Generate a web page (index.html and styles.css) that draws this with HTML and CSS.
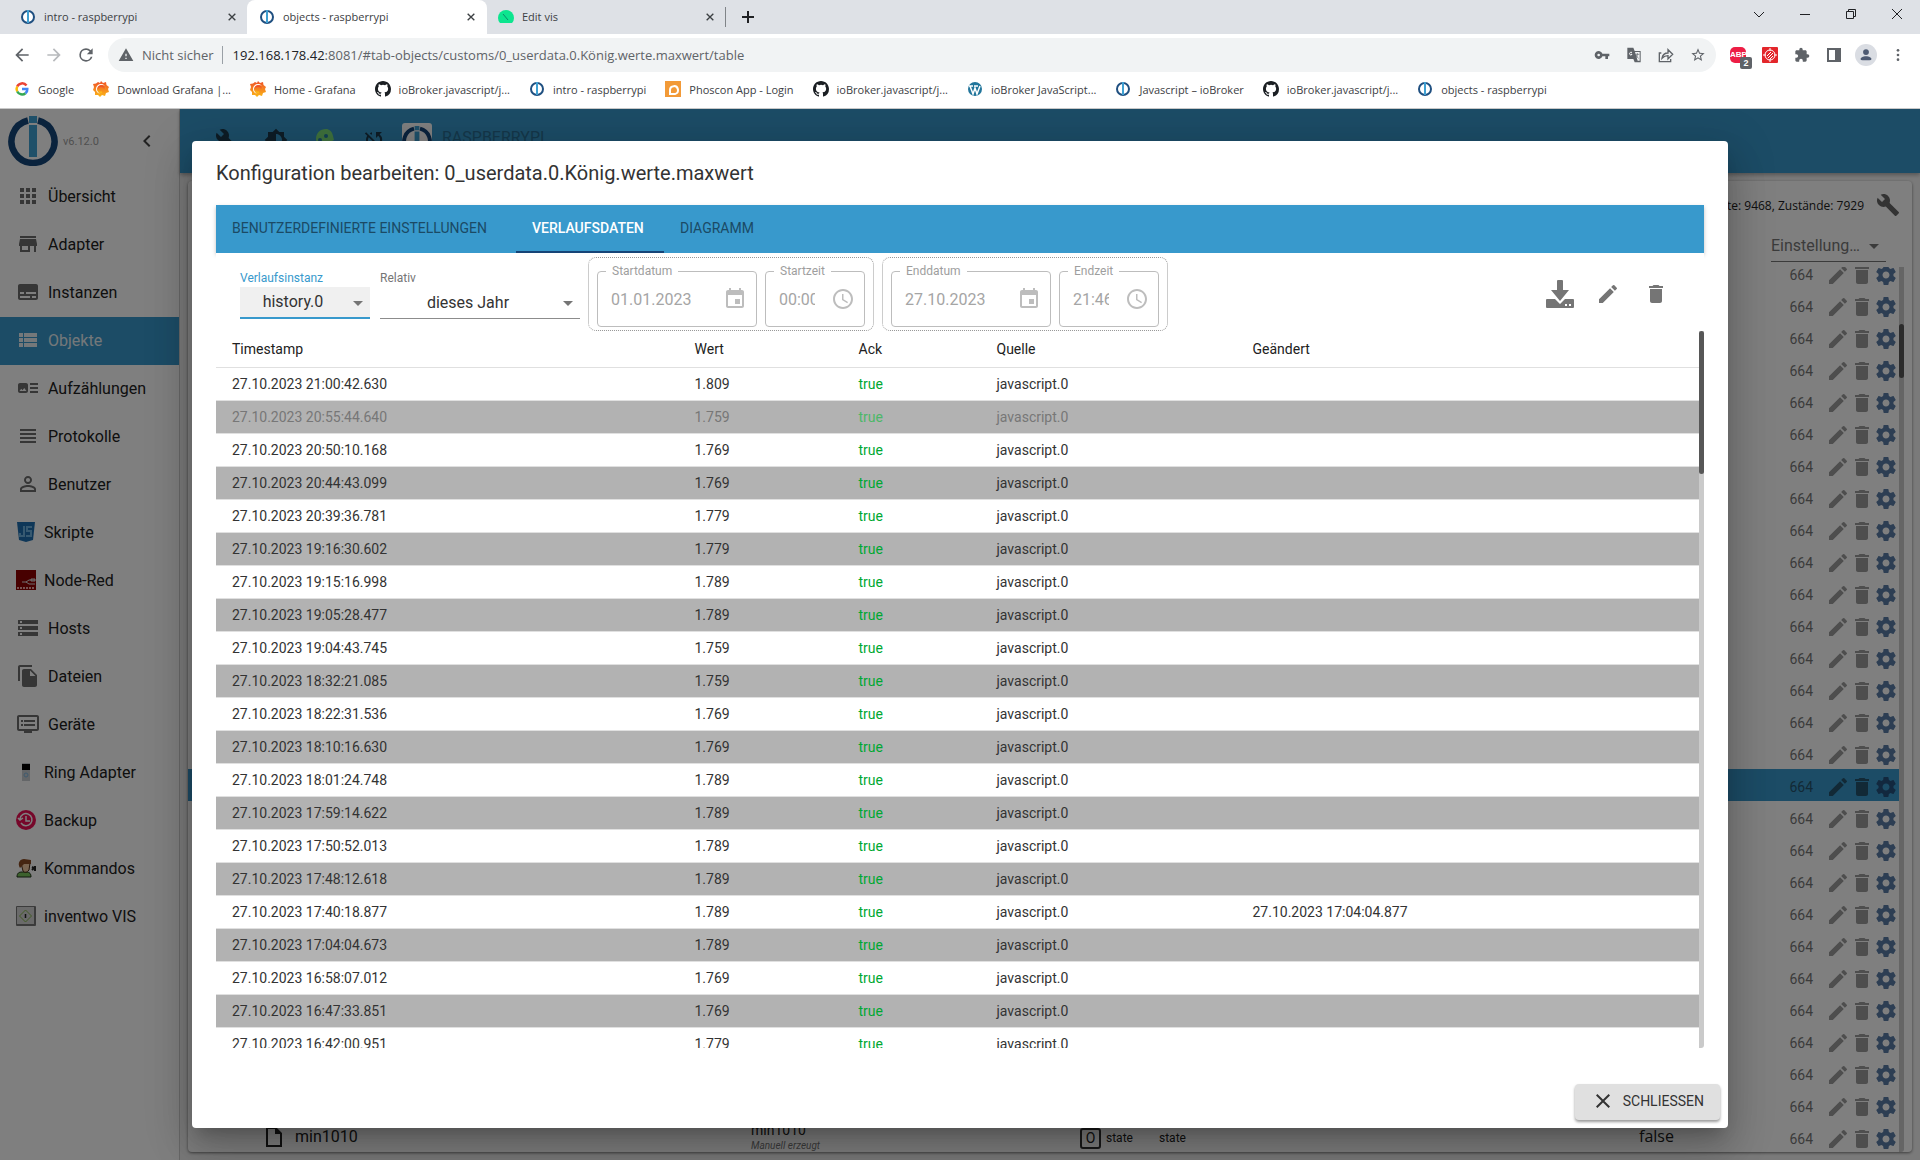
FILE: index.html
```html
<!DOCTYPE html>
<html lang="de">

<head>
    <meta charset="UTF-8">
    <title>objects - raspberrypi</title>
    <link rel="stylesheet" href="styles.css">
</head>

<body>
    <!-- icons -->
    <svg class="sprite" aria-hidden="true">
        <symbol id="i-wrench" viewBox="0 0 24 24"><path d="M22.7 19l-9.1-9.1c.9-2.3.4-5-1.5-6.9-2-2-5-2.4-7.4-1.3L9 6 6 9 1.6 4.7C.4 7.1.9 10.1 2.9 12.1c1.9 1.9 4.6 2.4 6.9 1.5l9.1 9.1c.4.4 1 .4 1.4 0l2.3-2.3c.5-.4.5-1.1.1-1.4z"/></symbol>
        <symbol id="i-edit" viewBox="0 0 24 24"><path d="M3 17.25V21h3.75L17.81 9.94l-3.75-3.75L3 17.25zM20.71 7.04a1 1 0 0 0 0-1.41l-2.34-2.34a1 1 0 0 0-1.41 0l-1.83 1.83 3.75 3.75 1.83-1.83z"/></symbol>
        <symbol id="i-delete" viewBox="0 0 24 24"><path d="M6 19c0 1.1.9 2 2 2h8c1.1 0 2-.9 2-2V7H6v12zM19 4h-3.5l-1-1h-5l-1 1H5v2h14V4z"/></symbol>
        <symbol id="i-gear" viewBox="0 0 24 24"><path d="M19.43 12.98c.04-.32.07-.64.07-.98s-.03-.66-.07-.98l2.11-1.65c.19-.15.24-.42.12-.64l-2-3.46c-.12-.22-.39-.3-.61-.22l-2.49 1c-.52-.4-1.08-.73-1.69-.98l-.38-2.65A.49.49 0 0 0 14 2h-4c-.25 0-.46.18-.49.42l-.38 2.65c-.61.25-1.17.59-1.69.98l-2.49-1c-.23-.09-.49 0-.61.22l-2 3.46c-.13.22-.07.49.12.64l2.11 1.65c-.04.32-.07.65-.07.98s.03.66.07.98l-2.11 1.65c-.19.15-.24.42-.12.64l2 3.46c.12.22.39.3.61.22l2.49-1c.52.4 1.08.73 1.69.98l.38 2.65c.03.24.24.42.49.42h4c.25 0 .46-.18.49-.42l.38-2.65c.61-.25 1.17-.59 1.69-.98l2.49 1c.23.09.49 0 .61-.22l2-3.46c.12-.22.07-.49-.12-.64l-2.11-1.65zM12 15.5c-1.93 0-3.5-1.57-3.5-3.5s1.57-3.5 3.5-3.5 3.5 1.57 3.5 3.5-1.57 3.5-3.5 3.5z"/></symbol>
        <symbol id="i-caret" viewBox="0 0 24 24"><path d="M7 10l5 5 5-5z"/></symbol>
        <symbol id="i-close" viewBox="0 0 24 24"><path d="M19 6.41L17.59 5 12 10.59 6.41 5 5 6.41 10.59 12 5 17.59 6.41 19 12 13.41 17.59 19 19 17.59 13.41 12z"/></symbol>
        <symbol id="i-left" viewBox="0 0 24 24"><path d="M15.41 7.41L14 6l-6 6 6 6 1.41-1.41L10.83 12z"/></symbol>
        <symbol id="i-calendar" viewBox="0 0 24 24"><path d="M17 12h-5v5h5v-5zM16 1v2H8V1H6v2H5c-1.11 0-1.99.9-1.99 2L3 19c0 1.1.89 2 2 2h14c1.1 0 2-.9 2-2V5c0-1.1-.9-2-2-2h-1V1h-2zm3 18H5V8h14v11z"/></symbol>
        <symbol id="i-clock" viewBox="0 0 24 24"><path d="M11.99 2C6.47 2 2 6.48 2 12s4.47 10 9.99 10C17.52 22 22 17.52 22 12S17.52 2 11.99 2zM12 20c-4.42 0-8-3.58-8-8s3.58-8 8-8 8 3.58 8 8-3.58 8-8 8zM12.5 7H11v6l5.25 3.15.75-1.23-4.5-2.67z"/></symbol>
        <symbol id="i-download" viewBox="0 0 28 28"><path d="M11 1q0-1 1-1h4q1 0 1 1v9h6l-9 11-9-11h6z"/><path d="M1 19h8l5 5 5-5h8q1 0 1 1v7q0 1-1 1H1q-1 0-1-1v-7q0-1 1-1zM19 24v2h2v-2zM23 24v2h2v-2z" fill-rule="evenodd"/></symbol>
        <symbol id="i-brightness" viewBox="0 0 24 24"><path d="M20 15.31L23.31 12 20 8.69V4h-4.69L12 .69 8.69 4H4v4.69L.69 12 4 15.31V20h4.69L12 23.31 15.31 20H20v-4.69zM12 18V6c3.31 0 6 2.69 6 6s-2.69 6-6 6z"/></symbol>
        <symbol id="i-head" viewBox="0 0 24 24"><path fill="#7ce07a" d="M13 1C7 1 3 5 3 11c0 3 1 5 3 6v5h9v-4h4v-5l2-1-1-4c-1-5-4-7-7-7z"/><circle cx="7" cy="12" r="2" fill="#267fa8"/><circle cx="13" cy="8" r="2" fill="#267fa8"/></symbol>
        <symbol id="i-syncoff" viewBox="0 0 24 24"><path d="M10 6.35V4.26c-.8.21-1.55.54-2.23.96l1.46 1.46c.25-.12.5-.24.77-.33zm-7.14-.94l2.36 2.36A7.93 7.93 0 0 0 4 12c0 2.21.91 4.2 2.36 5.64L4 20h6v-6l-2.24 2.24A6 6 0 0 1 6.7 9.23l8.08 8.08c-.25.13-.5.25-.77.34v2.09c.8-.21 1.55-.54 2.23-.96l2.36 2.36 1.27-1.27L4.14 4.14 2.86 5.41zM20 4h-6v6l2.24-2.24a6 6 0 0 1 1.06 7.01l1.46 1.46A7.93 7.93 0 0 0 17.64 6.36L20 4z"/></symbol>
        <symbol id="i-logo" viewBox="0 0 50 50"><path d="M20 4.500A21.500 21.500 0 1 0 30 4.500" fill="none" stroke="#15467a" stroke-width="6.500"/><path d="M21 0h8v7h-8zM21 9h8v32h-8z" fill="#3fa0d2"/></symbol>
        <symbol id="i-apps" viewBox="0 0 24 24"><path d="M4 8h4V4H4v4zm6 12h4v-4h-4v4zm-6 0h4v-4H4v4zm0-6h4v-4H4v4zm6 0h4v-4h-4v4zm6-10v4h4V4h-4zm-6 4h4V4h-4v4zm6 6h4v-4h-4v4zm0 6h4v-4h-4v4z"/></symbol>
        <symbol id="i-store" viewBox="0 0 24 24"><path d="M20 4H4v2h16V4zm1 10v-2l-1-5H4l-1 5v2h1v6h10v-6h4v6h2v-6h1zm-9 4H6v-4h6v4z"/></symbol>
        <symbol id="i-instances" viewBox="0 0 24 24"><path d="M20 4H4c-1.100 0-2 .9-2 2v12c0 1.100.9 2 2 2h16c1.100 0 2-.9 2-2V6c0-1.100-.9-2-2-2zM4 12h4v2H4v-2zm10 6H4v-2h10v2zm6 0h-4v-2h4v2zm0-4H10v-2h10v2z"/></symbol>
        <symbol id="i-list" viewBox="0 0 24 24"><path d="M3 14h4v-4H3v4zm0 5h4v-4H3v4zM3 9h4V5H3v4zm5 5h13v-4H8v4zm0 5h13v-4H8v4zM8 5v4h13V5H8z"/></symbol>
        <symbol id="i-enums" viewBox="0 0 24 24"><path d="M22 13h-8v-2h8v2zm0-6h-8v2h8V7zm-8 10h8v-2h-8v2zm-2-8v6c0 1.100-.9 2-2 2H4c-1.100 0-2-.9-2-2V9c0-1.100.9-2 2-2h6c1.100 0 2 .9 2 2zm-1.500 6l-2.250-3-1.750 2.260-1.250-1.510L3.500 15h7z"/></symbol>
        <symbol id="i-lines" viewBox="0 0 24 24"><path d="M4 15h16v-2H4v2zm0 4h16v-2H4v2zm0-8h16V9H4v2zm0-6v2h16V5H4z"/></symbol>
        <symbol id="i-person" viewBox="0 0 24 24"><path d="M12 5.900a2.100 2.100 0 1 1 0 4.200 2.100 2.100 0 0 1 0-4.200m0 9c2.970 0 6.100 1.460 6.100 2.100v1.100H5.900V17c0-.64 3.130-2.100 6.100-2.100M12 4C9.790 4 8 5.790 8 8s1.790 4 4 4 4-1.790 4-4-1.790-4-4-4zm0 9c-2.670 0-8 1.340-8 4v3h16v-3c0-2.660-5.330-4-8-4z"/></symbol>
        <symbol id="i-js" viewBox="0 0 20 20"><path fill="#1f6fb0" d="M1 0h18l-2 18-7 2-7-2z"/><g fill="none" stroke="#6fb2e0" stroke-width="2"><path d="M8 4v10H4v-3"/><path d="M16 5h-5v4h4v5h-5"/></g></symbol>
        <symbol id="i-nodered" viewBox="0 0 20 20"><path fill="#8f0000" d="M0 0h20v20H0z"/><path fill="none" stroke="#ddd" d="M6 12h4l3-2h6M10 12l3 2h6M15 9h4v2h-4z"/><path stroke="#eba5a5" stroke-width="2" stroke-dasharray="2 1" d="M1 18h18"/></symbol>
        <symbol id="i-hosts" viewBox="0 0 24 24"><path d="M2 20h20v-4H2v4zm2-3h2v2H4v-2zM2 4v4h20V4H2zm4 3H4V5h2v2zm-4 7h20v-4H2v4zm2-3h2v2H4v-2z"/></symbol>
        <symbol id="i-files" viewBox="0 0 24 24"><path d="M16 1H4c-1.100 0-2 .9-2 2v14h2V3h12V1zm-1 4l6 6v10c0 1.100-.9 2-2 2H7.990C6.890 23 6 22.100 6 21l.01-14c0-1.100.89-2 1.990-2h7zm-1 7h5.500L14 6.500V12z"/></symbol>
        <symbol id="i-devices" viewBox="0 0 24 24"><path d="M21 3H3c-1.100 0-2 .9-2 2v12c0 1.100.9 2 2 2h5v2h8v-2h5c1.100 0 1.990-.9 1.990-2L23 5c0-1.100-.9-2-2-2zm0 14H3V5h18v12zm-2-9H8v2h11V8zm0 4H8v2h11v-2zM7 8H5v2h2V8zm0 4H5v2h2v-2z"/></symbol>
        <symbol id="i-ring" viewBox="0 0 20 20"><path fill="#c9ccd0" d="M6 1h8v18H6z"/><path fill="#000" d="M6 2h8v6H6z"/><circle cx="10" cy="13" r="2" fill="none" stroke="#7fb7df"/></symbol>
        <symbol id="i-backup" viewBox="0 0 20 20"><circle cx="10" cy="10" r="10" fill="#ed0f55"/><path fill="none" stroke="#fff" stroke-width="1.500" d="M5 13a6 6 0 1 0-1-4M10 6v5h4M2 8l2 2 3-2"/></symbol>
        <symbol id="i-commands" viewBox="0 0 20 20"><path fill="#79c25a" stroke="#20301a" d="M1 19c0-4 2-5 5-5h4c4 0 5 2 5 5z"/><path fill="#f3c9a0" stroke="#4a2b14" d="M5 5h9l-1 7q-3 4-6 1z"/><path fill="#8a4b22" d="M4 10c-3-5 0-9 4-9l7 1v4H8z"/><path fill="none" stroke="#222" stroke-width="2" d="M16 9l2 1-2 2M19 8v5"/></symbol>
        <symbol id="i-inventwo" viewBox="0 0 20 20"><rect width="20" height="20" rx="1" fill="#777"/><path fill="#d4d4d4" d="M1 1h17v17H1z"/><path fill="none" stroke="#85b84d" d="M9.500 4l6 6-6 6-6-6z"/><path stroke="#222" stroke-width="1.500" d="M9.500 8v4"/></symbol>
        <symbol id="i-file" viewBox="0 0 24 24"><path d="M14 2H4v20h16V8zM6 20V4h7v5h5v11z"/></symbol>
        <symbol id="i-fav" viewBox="0 0 16 16"><circle cx="8" cy="8" r="6" fill="#fff" stroke="#1f4f80" stroke-width="2"/><path fill="#3fa0d2" d="M7 1h2v13H7z"/></symbol>
        <symbol id="i-vis" viewBox="0 0 16 16"><path fill="#0de58f" d="M2 14q-2-2-2-5a8 8 0 0 1 16 0q0 3-2 5z"/><path stroke="#0a8b6b" d="M5 5l5 6"/></symbol>
        <symbol id="i-google" viewBox="0 0 16 16"><g fill="none" stroke-width="2.500"><path stroke="#ea4335" d="M12.500 4.500A5.500 5.500 0 0 0 3.200 5.500"/><path stroke="#fbbc05" d="M3.200 5.500a5.500 5.500 0 0 0 0 5"/><path stroke="#34a853" d="M3.200 10.500a5.500 5.500 0 0 0 8.300 1.700"/><path stroke="#4285f4" d="M11.500 12.200A5 5 0 0 0 13.300 8H8"/></g></symbol>
        <symbol id="i-grafana" viewBox="0 0 16 16"><linearGradient id="gg" x2="0" y2="1"><stop stop-color="#ef4f28"/><stop offset="1" stop-color="#fbb817"/></linearGradient><path fill="url(#gg)" fill-rule="evenodd" d="M8 0l2 2 3-1 .5 3L16 6l-1 2 1 3-3 1-1 3-3-1-2 2-2-2-3 0 0-3-2-2 1-3-1-3 3-.5L5 1l2 1zM13 8a5 5 0 1 0-5 5 4 4 0 0 1-3-5 4 4 0 0 1 8 0z"/><path fill="none" stroke="url(#gg)" stroke-width="2" d="M11 8a3 3 0 1 0-2 3"/></symbol>
        <symbol id="i-github" viewBox="0 0 16 16"><path fill="#1b1f23" d="M8 0C3.580 0 0 3.580 0 8c0 3.540 2.290 6.530 5.470 7.590.4.070.55-.17.55-.38 0-.19-.01-.82-.01-1.490-2.010.37-2.530-.49-2.690-.94-.09-.23-.48-.94-.82-1.130-.28-.15-.68-.52-.01-.53.63-.01 1.080.58 1.230.82.72 1.210 1.870.87 2.330.66.07-.52.28-.87.51-1.070-1.780-.2-3.640-.89-3.640-3.950 0-.87.31-1.590.82-2.150-.08-.2-.36-1.020.08-2.120 0 0 .67-.21 2.200.82a7.600 7.600 0 0 1 4 0c1.530-1.040 2.200-.82 2.200-.82.44 1.100.16 1.920.08 2.120.51.56.82 1.270.82 2.150 0 3.070-1.870 3.750-3.650 3.950.29.25.54.73.54 1.480 0 1.070-.01 1.930-.01 2.200 0 .21.15.46.55.38A8.010 8.010 0 0 0 16 8c0-4.420-3.580-8-8-8z"/></symbol>
        <symbol id="i-phoscon" viewBox="0 0 16 16"><path fill="#f29a38" d="M0 0h16v16H0z"/><path fill="none" stroke="#fff" stroke-width="2" d="M5 13h5a4 4 0 1 0-5-4z"/></symbol>
        <symbol id="i-wordpress" viewBox="0 0 16 16"><circle cx="8" cy="8" r="7" fill="#21759b"/><path fill="none" stroke="#fff" stroke-width="1.500" d="M3 5l3 8 2-6 2 6 3-8M2 5h4M7 5h4"/></symbol>
        <symbol id="i-back" viewBox="0 0 24 24"><path d="M20 11H7.830l5.590-5.590L12 4l-8 8 8 8 1.410-1.410L7.830 13H20z"/></symbol>
        <symbol id="i-forward" viewBox="0 0 24 24"><path d="M12 4l-1.410 1.410L16.170 11H4v2h12.170l-5.580 5.590L12 20l8-8z"/></symbol>
        <symbol id="i-reload" viewBox="0 0 24 24"><path d="M17.650 6.350A7.960 7.960 0 0 0 12 4a8 8 0 1 0 7.730 10h-2.080A6 6 0 1 1 12 6c1.660 0 3.140.69 4.220 1.780L13 11h7V4z"/></symbol>
        <symbol id="i-warning" viewBox="0 0 24 24"><path d="M1 21h22L12 2zm12-3h-2v-2h2zm0-4h-2v-4h2z"/></symbol>
        <symbol id="i-key" viewBox="0 0 24 24"><path d="M12.650 10A6 6 0 1 0 12.650 14H17v4h4v-4h2v-4zM7 14a2 2 0 1 1 0-4 2 2 0 0 1 0 4z"/></symbol>
        <symbol id="i-translate" viewBox="0 0 24 24"><path d="M2 1h9l2 5h9v17h-9l-2-5H2zM13.500 7.500l4 13h3v-13z" fill-rule="evenodd"/><path d="M9 8H7a2 2 0 1 0 2 3H7" fill="none" stroke="#fff" stroke-width="1.500"/><path d="M14 11h6M17 9v2q0 3-2 5M15 12q1 3 4 5" fill="none" stroke="#5f6368"/></symbol>
        <symbol id="i-share" viewBox="0 0 24 24"><path fill="none" stroke="#5f6368" stroke-width="2" d="M5 9H2v13h17v-4M6 17c1-6 4-8 9-8V4l7 7-7 7v-5c-4 0-6 1-9 4z"/></symbol>
        <symbol id="i-star" viewBox="0 0 24 24"><path d="M22 9.240l-7.190-.62L12 2 9.190 8.630 2 9.240l5.460 4.730L5.820 21 12 17.270 18.180 21l-1.630-7.030zM12 15.400l-3.760 2.270 1-4.280-3.320-2.880 4.380-.38L12 6.100l1.710 4.040 4.380.38-3.320 2.880 1 4.280z"/></symbol>
        <symbol id="i-target" viewBox="0 0 16 16"><rect width="16" height="16" rx="1" fill="#e3262b"/><g fill="none" stroke="#fff"><circle cx="8" cy="8" r="5"/><path d="M8 1v3M8 12v3M1 8h3M12 8h3M5 9l4-4M6 11l5-5M8 12l3-3"/></g></symbol>
        <symbol id="i-puzzle" viewBox="0 0 24 24"><path d="M20.500 11H19V7c0-1.100-.9-2-2-2h-4V3.500a2.500 2.500 0 0 0-5 0V5H4c-1.100 0-2 .9-2 2v3.800h1.500a2.700 2.700 0 0 1 0 5.400H2V20c0 1.100.9 2 2 2h3.800v-1.500a2.700 2.700 0 0 1 5.400 0V22H17c1.100 0 2-.9 2-2v-4h1.500a2.500 2.500 0 0 0 0-5z"/></symbol>
        <symbol id="i-panel" viewBox="0 0 16 16"><path d="M1 1h14v14H1zM3 3v10h6V3z" fill-rule="evenodd"/></symbol>
        <symbol id="i-user" viewBox="0 0 24 24"><circle cx="12" cy="7" r="5"/><path d="M2 21c0-5 5-7 10-7s10 2 10 7z"/></symbol>
        <symbol id="i-dots" viewBox="0 0 24 24"><circle cx="12" cy="5" r="2"/><circle cx="12" cy="12" r="2"/><circle cx="12" cy="19" r="2"/></symbol>
        <symbol id="w-down" viewBox="0 0 12 12"><path d="M1 4l5 5 5-5"/></symbol>
        <symbol id="w-min" viewBox="0 0 12 12"><path d="M1 6.500h10"/></symbol>
        <symbol id="w-max" viewBox="0 0 12 12"><path d="M1.500 3.500h7v7h-7zM3.500 3.500v-2h7v7h-2"/></symbol>
        <symbol id="w-close" viewBox="0 0 12 12"><path d="M1 1l10 10M11 1L1 11"/></symbol>
        <symbol id="w-plus" viewBox="0 0 12 12"><path d="M6 0v12M0 6h12"/></symbol>
    </svg>

    <div class="browser">
        <div class="tabstrip">
            <div class="tab"><svg class="fav"><use href="#i-fav"/></svg><span>intro - raspberrypi</span><button aria-label="Tab schließen"><svg><use href="#w-close"/></svg></button></div>
            <div class="tab active"><svg class="fav"><use href="#i-fav"/></svg><span>objects - raspberrypi</span><button aria-label="Tab schließen"><svg><use href="#w-close"/></svg></button></div>
            <div class="tab last"><svg class="fav"><use href="#i-vis"/></svg><span>Edit vis</span><button aria-label="Tab schließen"><svg><use href="#w-close"/></svg></button></div>
            <button class="newtab" aria-label="Neuer Tab"><svg><use href="#w-plus"/></svg></button>
            <div class="window-buttons">
                <button aria-label="Tabs durchsuchen"><svg><use href="#w-down"/></svg></button>
                <button aria-label="Minimieren"><svg><use href="#w-min"/></svg></button>
                <button aria-label="Wiederherstellen"><svg><use href="#w-max"/></svg></button>
                <button aria-label="Fenster schließen"><svg><use href="#w-close"/></svg></button>
            </div>
        </div>
        <div class="navbar">
            <button aria-label="Zurück"><svg><use href="#i-back"/></svg></button>
            <button aria-label="Vorwärts" class="off"><svg><use href="#i-forward"/></svg></button>
            <button aria-label="Neu laden"><svg><use href="#i-reload"/></svg></button>
            <div class="omnibox">
                <svg class="warn"><use href="#i-warning"/></svg>
                <span class="insecure">Nicht sicher</span>
                <span class="url"><b>192.168.178.42</b>:8081/#tab-objects/customs/0_userdata.0.König.werte.maxwert/table</span>
                <button aria-label="Passwörter"><svg><use href="#i-key"/></svg></button>
                <button aria-label="Übersetzen"><svg><use href="#i-translate"/></svg></button>
                <button aria-label="Teilen"><svg><use href="#i-share"/></svg></button>
                <button aria-label="Lesezeichen"><svg><use href="#i-star"/></svg></button>
            </div>
            <button class="abp" aria-label="Adblock"><span>ABP</span><i>2</i></button>
            <button aria-label="Erweiterung"><svg><use href="#i-target"/></svg></button>
            <button aria-label="Erweiterungen"><svg><use href="#i-puzzle"/></svg></button>
            <button aria-label="Seitenleiste"><svg><use href="#i-panel"/></svg></button>
            <button class="avatar" aria-label="Profil"><svg><use href="#i-user"/></svg></button>
            <button aria-label="Menü"><svg><use href="#i-dots"/></svg></button>
        </div>
        <div class="bookmarks">
            <a href="#"><svg><use href="#i-google"/></svg>Google</a>
            <a href="#"><svg><use href="#i-grafana"/></svg>Download Grafana |...</a>
            <a href="#"><svg><use href="#i-grafana"/></svg>Home - Grafana</a>
            <a href="#"><svg><use href="#i-github"/></svg>ioBroker.javascript/j...</a>
            <a href="#"><svg><use href="#i-fav"/></svg>intro - raspberrypi</a>
            <a href="#"><svg><use href="#i-phoscon"/></svg>Phoscon App - Login</a>
            <a href="#"><svg><use href="#i-github"/></svg>ioBroker.javascript/j...</a>
            <a href="#"><svg><use href="#i-wordpress"/></svg>ioBroker JavaScript...</a>
            <a href="#"><svg><use href="#i-fav"/></svg>Javascript – ioBroker</a>
            <a href="#"><svg><use href="#i-github"/></svg>ioBroker.javascript/j...</a>
            <a href="#"><svg><use href="#i-fav"/></svg>objects - raspberrypi</a>
        </div>
    </div>

    <div class="app">
        <div class="sidebar">
            <div class="brand">
                <svg class="logo"><use href="#i-logo"/></svg>
                <span>v6.12.0</span>
                <button aria-label="Menü einklappen"><svg><use href="#i-left"/></svg></button>
            </div>
            <nav>
                <a href="#"><svg><use href="#i-apps"/></svg>Übersicht</a>
                <a href="#"><svg><use href="#i-store"/></svg>Adapter</a>
                <a href="#"><svg><use href="#i-instances"/></svg>Instanzen</a>
                <a href="#" class="selected"><svg><use href="#i-list"/></svg>Objekte</a>
                <a href="#"><svg><use href="#i-enums"/></svg>Aufzählungen</a>
                <a href="#"><svg><use href="#i-lines"/></svg>Protokolle</a>
                <a href="#"><svg><use href="#i-person"/></svg>Benutzer</a>
                <a href="#" class="img"><svg><use href="#i-js"/></svg>Skripte</a>
                <a href="#" class="img"><svg><use href="#i-nodered"/></svg>Node-Red</a>
                <a href="#"><svg><use href="#i-hosts"/></svg>Hosts</a>
                <a href="#"><svg><use href="#i-files"/></svg>Dateien</a>
                <a href="#"><svg><use href="#i-devices"/></svg>Geräte</a>
                <a href="#" class="img"><svg><use href="#i-ring"/></svg>Ring Adapter</a>
                <a href="#" class="img"><svg><use href="#i-backup"/></svg>Backup</a>
                <a href="#" class="img"><svg><use href="#i-commands"/></svg>Kommandos</a>
                <a href="#" class="img"><svg><use href="#i-inventwo"/></svg>inventwo VIS</a>
            </nav>
        </div>

        <div class="main">
            <header class="appbar">
                <button aria-label="Einstellungen"><svg><use href="#i-wrench"/></svg></button>
                <button aria-label="Farbschema"><svg><use href="#i-brightness"/></svg></button>
                <button aria-label="Expertenmodus"><svg><use href="#i-head"/></svg></button>
                <button aria-label="Synchronisierung"><svg><use href="#i-syncoff"/></svg></button>
                <svg class="host-logo"><use href="#i-logo"/></svg>
                <span>RASPBERRYPI</span>
            </header>
            <div class="panel">
                <div class="stats">
                    <span>Objekte: 9468, Zustände: 7929</span>
                    <svg><use href="#i-wrench"/></svg>
                </div>
                <div class="filter">
                    <button>Einstellung…<svg><use href="#i-caret"/></svg></button>
                </div>
                <div class="objects">
                    <table>
                        <colgroup>
                            <col>
                            <col class="c-name">
                            <col class="c-type">
                            <col class="c-role">
                            <col class="c-value">
                            <col class="c-rights">
                            <col class="c-buttons">
                        </colgroup>
                        <tbody id="objectRows"></tbody>
                    </table>
                    <div class="track"><div class="thumb"></div></div>
                </div>
            </div>
        </div>

        <div class="backdrop">
            <div class="dialog" role="dialog" aria-labelledby="title">
                <h2 id="title">Konfiguration bearbeiten: 0_userdata.0.König.werte.maxwert</h2>
                <div class="content">
                    <div class="tabs">
                        <button class="custom">BENUTZERDEFINIERTE EINSTELLUNGEN</button>
                        <button class="current">VERLAUFSDATEN</button>
                        <button>DIAGRAMM</button>
                    </div>
                    <div class="toolbar">
                        <div class="select instance">
                            <label for="instance">Verlaufsinstanz</label>
                            <select id="instance"><option>history.0</option></select>
                            <svg><use href="#i-caret"/></svg>
                        </div>
                        <div class="select relative">
                            <label for="range">Relativ</label>
                            <select id="range"><option>dieses Jahr</option></select>
                            <svg><use href="#i-caret"/></svg>
                        </div>
                        <div class="range">
                            <fieldset class="date">
                                <legend><label for="startDate">Startdatum</label></legend>
                                <div><input id="startDate" type="text" value="01.01.2023" disabled><svg><use href="#i-calendar"/></svg></div>
                            </fieldset>
                            <fieldset class="time">
                                <legend><label for="startTime">Startzeit</label></legend>
                                <div><input id="startTime" type="text" value="00:00" disabled><svg><use href="#i-clock"/></svg></div>
                            </fieldset>
                        </div>
                        <div class="range">
                            <fieldset class="date">
                                <legend><label for="endDate">Enddatum</label></legend>
                                <div><input id="endDate" type="text" value="27.10.2023" disabled><svg><use href="#i-calendar"/></svg></div>
                            </fieldset>
                            <fieldset class="time">
                                <legend><label for="endTime">Endzeit</label></legend>
                                <div><input id="endTime" type="text" value="21:46" disabled><svg><use href="#i-clock"/></svg></div>
                            </fieldset>
                        </div>
                        <div class="actions">
                            <button aria-label="Exportieren"><svg class="big"><use href="#i-download"/></svg></button>
                            <button aria-label="Bearbeiten"><svg><use href="#i-edit"/></svg></button>
                            <button aria-label="Löschen"><svg><use href="#i-delete"/></svg></button>
                        </div>
                    </div>
                    <div class="history">
                        <div class="scroller">
                            <table>
                                <thead>
                                    <tr><th>Timestamp</th><th class="h-val">Wert</th><th class="h-ack">Ack</th><th class="h-from">Quelle</th><th>Geändert</th></tr>
                                </thead>
                                <tbody id="historyRows"></tbody>
                            </table>
                        </div>
                        <div class="track"><div class="thumb"></div></div>
                    </div>
                </div>
                <div class="footer">
                    <button><svg><use href="#i-close"/></svg>SCHLIESSEN</button>
                </div>
            </div>
        </div>
    </div>

    <script>
        const history = [
            ['21:00:42.630', '1.809'],
            ['20:55:44.640', '1.759'],
            ['20:50:10.168', '1.769'],
            ['20:44:43.099', '1.769'],
            ['20:39:36.781', '1.779'],
            ['19:16:30.602', '1.779'],
            ['19:15:16.998', '1.789'],
            ['19:05:28.477', '1.789'],
            ['19:04:43.745', '1.759'],
            ['18:32:21.085', '1.759'],
            ['18:22:31.536', '1.769'],
            ['18:10:16.630', '1.769'],
            ['18:01:24.748', '1.789'],
            ['17:59:14.622', '1.789'],
            ['17:50:52.013', '1.789'],
            ['17:48:12.618', '1.789'],
            ['17:40:18.877', '1.789', '27.10.2023 17:04:04.877'],
            ['17:04:04.673', '1.789'],
            ['16:58:07.012', '1.769'],
            ['16:47:33.851', '1.769'],
            ['16:42:00.951', '1.779']
        ];

        document.getElementById('historyRows').innerHTML = history.map((row, i) => `
            <tr class="${i === 1 ? 'hover' : ''}">
                <td>27.10.2023 ${row[0]}</td>
                <td>${row[1]}</td>
                <td class="ack">true</td>
                <td>javascript.0</td>
                <td>${row[2] || ''}</td>
            </tr>`).join('');

        // object list behind the dialog
        const icon = (name, label) => `<button aria-label="${label}"><svg><use href="#i-${name}"/></svg></button>`;
        const rowCount = 28;
        const selectedRow = 16;
        let rows = '';
        for (let i = 0; i < rowCount; i++) {
            const cells = i === rowCount - 1
                ? `<td class="id"><div><svg><use href="#i-file"/></svg>min1010</div></td>
                   <td class="name">min1010<small>Manuell erzeugt</small></td>
                   <td class="type"><div><span>O</span>state</div></td>
                   <td class="role">state</td>
                   <td class="value">false</td>`
                : '<td></td><td></td><td></td><td></td><td></td>';
            rows += `<tr class="${i === selectedRow ? 'selected' : ''}">${cells}
                <td class="rights">664</td>
                <td class="buttons"><div>${icon('edit', 'Bearbeiten')}${icon('delete', 'Löschen')}${icon('gear', 'Konfiguration')}</div></td></tr>`;
        }
        document.getElementById('objectRows').innerHTML = rows;
    </script>
</body>

</html>
```

FILE: styles.css
```css
* {
    box-sizing: border-box;
}

body {
    margin: 0;
    height: 100vh;
    display: flex;
    flex-direction: column;
    overflow: hidden;
    font-family: Roboto, "Liberation Sans", sans-serif;
    font-size: 14px;
    color: #212121;
}

button {
    margin: 0;
    padding: 0;
    border: none;
    background: none;
    font: inherit;
    color: inherit;
    display: flex;
    align-items: center;
    justify-content: center;
    cursor: pointer;
}

a {
    color: inherit;
    text-decoration: none;
}

svg {
    display: block;
    flex: none;
    width: 24px;
    height: 24px;
    fill: currentColor;
}

.sprite {
    position: absolute;
    width: 0;
    height: 0;
}

table {
    border-collapse: collapse;
    table-layout: fixed;
    width: 100%;
}

/* browser frame */
.browser {
    flex: none;
    background: #fff;
    border-bottom: 1px solid #c8c8c8;
    font-family: "Open Sans", "Noto Sans", sans-serif;
    font-size: 11px;
    color: #3c4043;
}

.tabstrip {
    display: flex;
    height: 34px;
    background: #dee1e6;
}

.tab {
    width: 240px;
    margin-right: -1px;
    padding: 0 8px 0 20px;
    display: flex;
    align-items: center;
    gap: 8px;
}

.tab:first-child {
    width: 248px;
}

.tab.active,
.tab.last {
    padding-left: 12px;
}

.tab.active {
    background: #fff;
    border-radius: 8px 8px 0 0;
}

.tab span {
    flex: 1;
    padding-bottom: 1px;
}

.tab button {
    width: 16px;
}

.tab button svg {
    width: 8px;
    height: 8px;
    stroke: #3c4043;
    stroke-width: 2;
}

.fav {
    width: 16px;
    height: 16px;
}

.newtab {
    width: 46px;
    position: relative;
}

.newtab::before {
    content: "";
    position: absolute;
    left: 0;
    top: 7px;
    height: 20px;
    border-left: 1px solid #808488;
}

.newtab svg,
.window-buttons svg {
    width: 12px;
    height: 12px;
    fill: none;
    stroke: #202124;
}

.newtab svg {
    stroke-width: 2;
}

.window-buttons {
    margin-left: auto;
    display: flex;
    height: 28px;
}

.window-buttons button {
    width: 46px;
}

.navbar {
    display: flex;
    align-items: center;
    height: 42px;
    padding: 0 6px;
    color: #5f6368;
}

.navbar > button {
    width: 32px;
    height: 32px;
}

.navbar button svg {
    width: 16px;
    height: 16px;
}

.navbar > button:nth-child(-n+3) svg {
    width: 20px;
    height: 20px;
}

.navbar .off {
    color: #b8babd;
}

.omnibox {
    flex: 1;
    height: 34px;
    margin: 0 6px;
    padding: 0 2px 0 10px;
    border-radius: 17px;
    background: #f1f3f4;
    display: flex;
    align-items: center;
    font-size: 13px;
}

.omnibox .warn {
    width: 16px;
    height: 16px;
    margin-right: 8px;
}

.insecure {
    padding-right: 8px;
    border-right: 1px solid #9aa0a6;
}

.url {
    flex: 1;
    padding-left: 10px;
}

.url b {
    font-weight: normal;
    color: #202124;
}

.omnibox button {
    width: 32px;
    height: 32px;
}

.abp {
    position: relative;
}

.abp span {
    width: 16px;
    height: 16px;
    border-radius: 5px;
    background: #ed1e45;
    color: #fff;
    font: bold 8px/16px "Liberation Sans", sans-serif;
    overflow: hidden;
}

.abp i {
    position: absolute;
    right: 2px;
    bottom: 2px;
    width: 12px;
    height: 12px;
    border-radius: 2px;
    background: #5f6368;
    color: #fff;
    font: bold 9px/12px "Liberation Sans", sans-serif;
}

.navbar .avatar svg {
    width: 22px;
    height: 22px;
    padding: 4px;
    border-radius: 50%;
    background: #dadde3;
    color: #4d5a72;
}

.bookmarks {
    display: flex;
    height: 32px;
    padding: 0 14px;
    gap: 19px;
    align-items: center;
}

.bookmarks a {
    display: flex;
    align-items: center;
    gap: 8px;
    white-space: nowrap;
    padding-bottom: 6px;
}

.bookmarks svg {
    width: 16px;
    height: 16px;
}

/* admin */
.app {
    flex: 1;
    min-height: 0;
    position: relative;
    display: flex;
    background: #f5f5f5;
    overflow: hidden;
}

.sidebar {
    width: 180px;
    flex: none;
    background: #fff;
    border-right: 1px solid #d0d0d0;
}

.brand {
    height: 64px;
    padding: 0 20px 0 8px;
    display: flex;
    align-items: center;
    color: #a0a0a0;
}

.brand .logo {
    width: 50px;
    height: 50px;
}

.brand span {
    flex: 1;
    padding-left: 5px;
    font-size: 11px;
}

.brand button {
    color: #444;
}

.sidebar nav a {
    display: flex;
    align-items: center;
    gap: 8px;
    height: 48px;
    padding: 0 0 2px 16px;
    font-size: 16px;
}

.sidebar nav svg {
    color: #6c6c6c;
}

.sidebar nav .img svg {
    width: 20px;
    height: 20px;
}

.sidebar nav .selected,
.sidebar nav .selected svg {
    color: #e8f0f4;
}

.sidebar nav .selected {
    background: #3899cc;
}

.main {
    flex: 1;
    min-width: 0;
    display: flex;
    flex-direction: column;
}

.appbar {
    height: 64px;
    padding-left: 22px;
    display: flex;
    align-items: center;
    background: #3899cc;
    color: #1d3a4c;
    box-shadow: 0 2px 4px rgba(0, 0, 0, 0.3);
    font-size: 16px;
}

.appbar button {
    width: 49px;
    height: 48px;
    padding-bottom: 2px;
}

.host-logo {
    width: 30px;
    height: 36px;
    margin: 0 10px 0 4px;
    border-radius: 3px;
    background: #fff;
}

.appbar span {
    padding-bottom: 8px;
    color: #2b6f94;
}

.panel {
    flex: 1;
    min-height: 0;
    margin: 8px;
    display: flex;
    flex-direction: column;
    background: #fff;
    border-radius: 4px;
    box-shadow: 0 1px 3px rgba(0, 0, 0, 0.5);
    overflow: hidden;
}

.stats,
.filter {
    display: flex;
    align-items: center;
    justify-content: flex-end;
}

.stats {
    height: 48px;
    padding-right: 12px;
    gap: 12px;
    font: 12px "Open Sans", sans-serif;
}

.stats svg {
    color: #666;
}

.filter {
    height: 38px;
    padding: 0 26px 4px 0;
    color: #777;
    font-size: 16px;
}

.filter button {
    width: 115px;
    height: 32px;
    justify-content: space-between;
    border-bottom: 1px solid #777;
}

.objects {
    flex: 1;
    min-height: 0;
    display: flex;
    padding-right: 8px;
    overflow: hidden;
}

.objects table {
    flex: 1;
    margin-top: -10px;
}

.c-name {
    width: 329px;
}

.c-type {
    width: 79px;
}

.c-role {
    width: 480px;
}

.c-value {
    width: 130px;
}

.c-rights {
    width: 44px;
}

.c-buttons {
    width: 86px;
}

.objects tr {
    height: 32px;
}

.objects td {
    height: 32px;
    padding: 6px 0 0;
    vertical-align: top;
    line-height: 24px;
    color: #222;
}

.objects .selected {
    background: #3899cc;
}

.objects .id div,
.objects .type div,
.buttons div {
    display: flex;
    align-items: center;
}

.objects .id {
    padding: 4px 0 0 74px;
    font-size: 16px;
}

.objects .id svg {
    margin-right: 9px;
}

.objects .name {
    padding: 0;
    line-height: 18px;
}

.name small {
    display: block;
    font-size: 10px;
    line-height: 14px;
    font-style: italic;
    color: #777;
}

.objects .type,
.objects .role {
    font-size: 12px;
    padding-top: 5px;
}

.type span {
    width: 21px;
    height: 21px;
    margin-right: 5px;
    border: 2px solid #333;
    border-radius: 3px;
    text-align: center;
    font-size: 14px;
    line-height: 17px;
}

.objects .value {
    padding-top: 5px;
    font: 16px/20px "Open Sans", sans-serif;
}

.objects .rights {
    text-align: right;
    color: #777;
}

.buttons div {
    justify-content: flex-end;
    padding-right: 1px;
    color: #9c9c9c;
}

.buttons button:last-child {
    color: #5a7ca6;
}

.objects .selected .rights,
.selected .buttons div {
    color: #25536d;
}

.selected .buttons button:last-child {
    color: #24517c;
}

.track {
    width: 5px;
    flex: none;
    background: #cacaca;
    border-radius: 0 0 3px 0;
}

.thumb {
    height: 20%;
    background: #575757;
    border-radius: 3px;
}

.objects .thumb {
    height: 54px;
    margin-top: 57px;
}

/* dialog */
.backdrop {
    position: absolute;
    inset: 0;
    padding: 32px;
    display: flex;
    justify-content: center;
    background: rgba(0, 0, 0, 0.5);
}

.dialog {
    width: 100%;
    max-width: 1536px;
    display: flex;
    flex-direction: column;
    background: #fff;
    border-radius: 4px;
    box-shadow: 0 11px 15px -7px rgba(0, 0, 0, 0.2), 0 24px 38px 3px rgba(0, 0, 0, 0.14), 0 9px 46px 8px rgba(0, 0, 0, 0.12);
}

.dialog h2 {
    margin: 0;
    padding: 16px 24px;
    font-size: 20px;
    font-weight: 400;
    line-height: 32px;
    color: #333;
}

.content {
    flex: 1;
    min-height: 0;
    padding: 0 24px 28px;
    display: flex;
    flex-direction: column;
}

.tabs {
    display: flex;
    height: 48px;
    flex: none;
    background: #3899cc;
    box-shadow: 0 2px 4px rgba(0, 0, 0, 0.25);
    color: #1b4a65;
}

.tabs button {
    min-width: 148px;
    padding: 0 16px 2px;
    justify-content: flex-start;
}

.tabs .custom {
    min-width: 300px;
}

.tabs .current {
    color: #fff;
    font-weight: 500;
    box-shadow: inset 0 -2px #164477;
}

.toolbar {
    display: flex;
    align-items: center;
    gap: 8px;
    padding: 4px 24px 0;
    position: relative;
    background: #fff;
}

.select {
    position: relative;
    display: flex;
    flex-direction: column;
    width: 200px;
}

.select.instance {
    width: 130px;
    margin-right: 2px;
}

.select label {
    font-size: 12px;
    line-height: 17px;
    color: #757575;
}

.select select {
    appearance: none;
    height: 32px;
    padding: 0 24px 0 0;
    border: none;
    border-bottom: 1px solid #8c8c8c;
    border-radius: 0;
    background: none;
    font: 16px Roboto, sans-serif;
    color: #333;
    text-align: center;
    text-align-last: center;
}

.select svg {
    position: absolute;
    right: 0;
    bottom: 4px;
    color: #757575;
    pointer-events: none;
}

.instance label {
    color: #3899cc;
}

.instance select {
    background: #f0f0f0;
    border-bottom: 2px solid #3899cc;
}

.range {
    display: flex;
    gap: 8px;
    height: 74px;
    padding: 6px 8px 2px;
    border: 1px dotted #999;
    border-radius: 8px;
}

.range fieldset {
    width: 160px;
    min-width: 0;
    height: 63px;
    margin: 0;
    padding: 0 9px 0 8px;
    border: 1px solid #bdbdbd;
    border-radius: 4px;
    color: #9e9e9e;
}

.range .time {
    width: 100px;
}

.range legend {
    padding: 0 6px;
    font-size: 12px;
    line-height: 14px;
}

.range fieldset div {
    display: flex;
    align-items: center;
    justify-content: space-between;
    padding-left: 5px;
    height: 42px;
}

.range input {
    width: 88px;
    padding: 0;
    border: none;
    background: none;
    font: 16px Roboto, sans-serif;
    color: #a5a5a5;
}

.range .time input {
    width: 36px;
}

.range svg {
    color: #bdbdbd;
}

.actions {
    margin-left: auto;
    display: flex;
    color: #757575;
}

.actions button {
    width: 48px;
    height: 48px;
}

.actions .big {
    width: 28px;
    height: 28px;
}

.history {
    flex: 1;
    min-height: 0;
    display: flex;
}

.scroller {
    flex: 1;
    overflow: hidden;
}

.history th {
    padding: 8px 16px;
    border-bottom: 1px solid #e0e0e0;
    text-align: left;
    font-weight: 400;
    line-height: 20px;
    color: #212121;
}

.h-val {
    width: 164px;
}

.h-ack {
    width: 138px;
}

.h-from {
    width: 256px;
}

.history td {
    padding: 6px 16px;
    border-bottom: 1px solid #e0e0e0;
    line-height: 20px;
    color: #333;
}

.history tbody tr:nth-child(even) {
    background: #b2b2b2;
}

.history .ack {
    color: #00a832;
}

.history tbody .hover {
    background: #c9c9c9;
}

.hover td {
    color: #777;
}

.history .hover .ack {
    color: #4cb868;
}

.footer {
    display: flex;
    justify-content: flex-end;
    padding: 8px;
}

.footer button {
    height: 36px;
    padding: 0 16px 2px;
    gap: 8px;
    border-radius: 4px;
    background: #e0e0e0;
    color: #333;
    box-shadow: 0 2px 3px rgba(0, 0, 0, 0.4);
}
```
